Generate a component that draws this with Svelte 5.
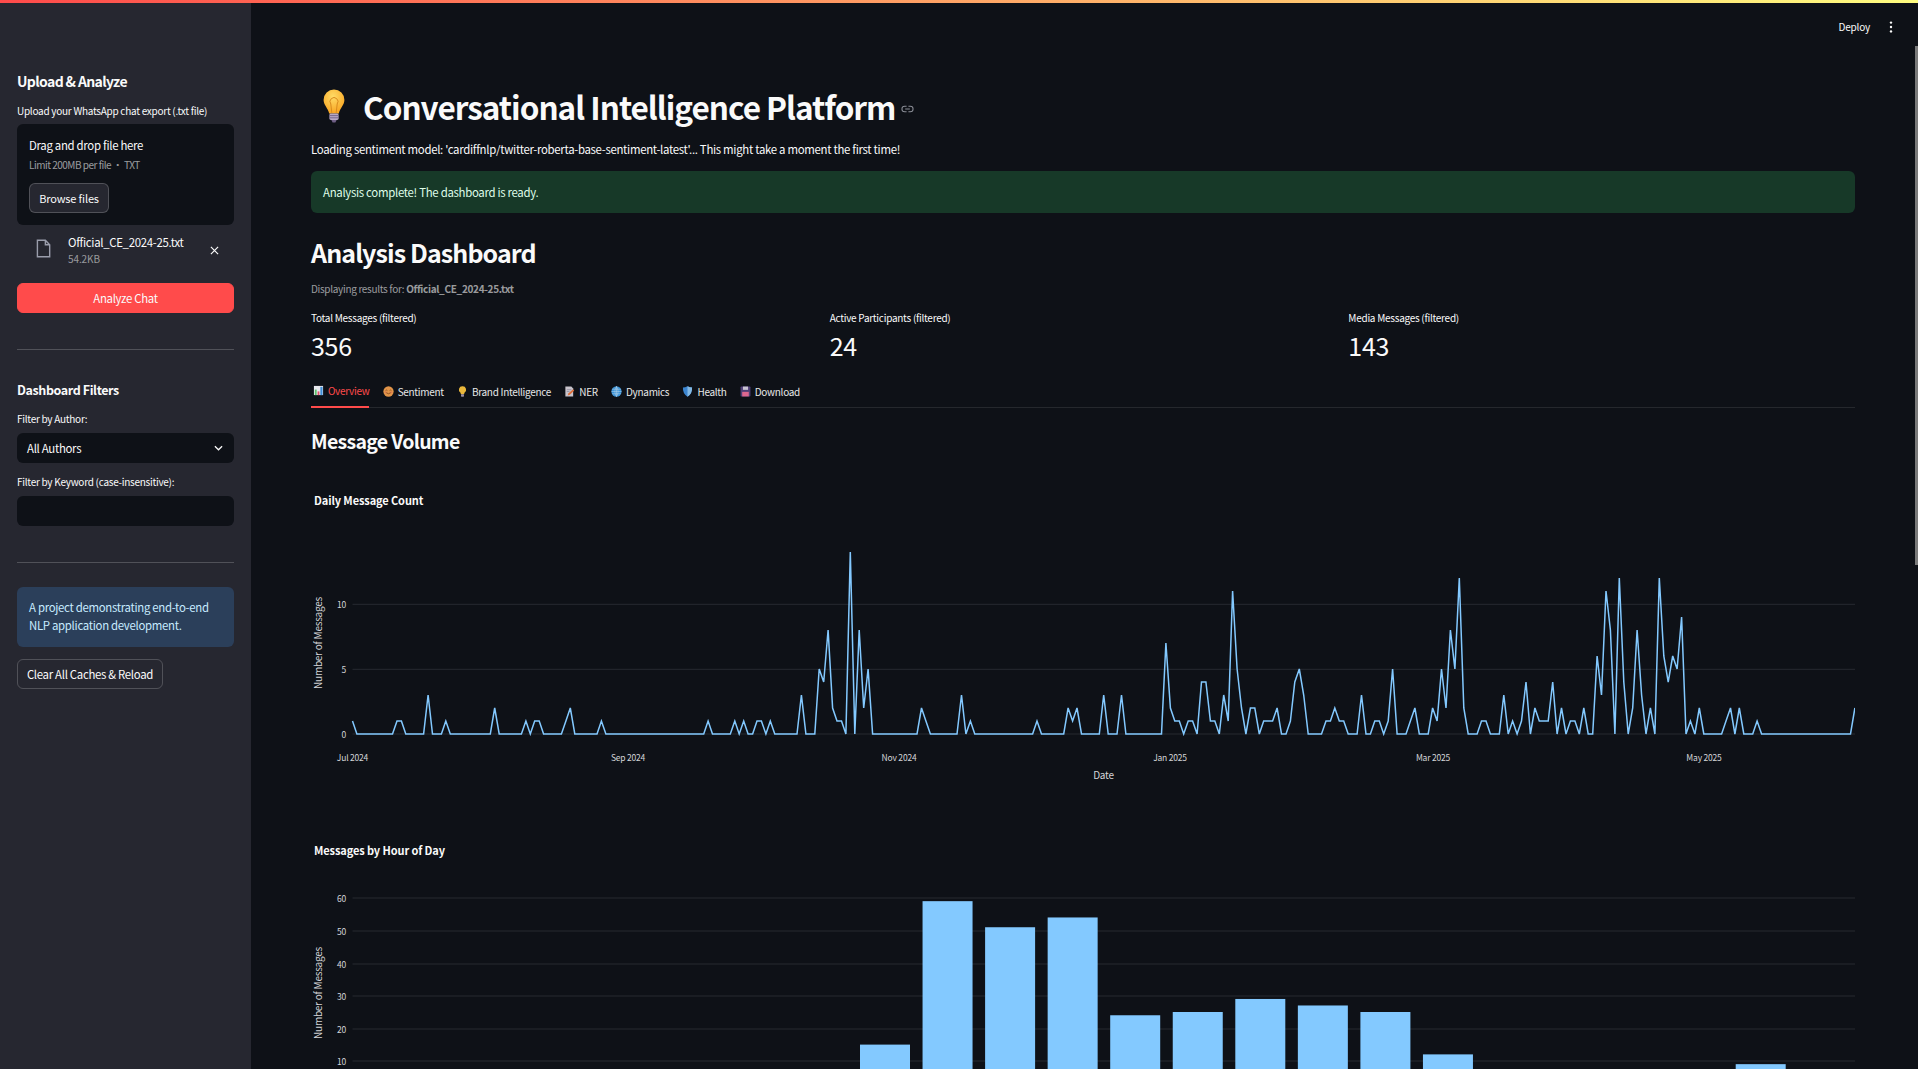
<script>
  const sparse = {0:1,10:1,11:1,17:3,21:1,32:2,39:1,41:1,42:1,48:1,49:2,56:1,80:1,86:1,88:1,91:1,92:1,94:1,101:3,105:5,106:4,107:8,108:2,109:1,110:1,112:14,114:8,115:2,116:5,128:2,129:1,137:3,139:1,154:1,161:2,162:1,163:2,169:3,173:3,183:7,184:2,185:1,186:1,188:1,189:1,191:4,192:4,193:1,194:1,196:3,197:1,198:11,199:5,200:2,202:2,203:2,205:1,206:1,207:1,208:2,211:1,212:4,213:5,214:3,219:1,220:1,221:2,222:1,223:1,227:3,230:1,231:1,233:1,234:5,238:1,239:2,243:2,244:1,245:5,246:2,247:8,248:5,249:12,250:2,254:1,255:1,259:3,261:1,263:1,264:4,266:2,267:1,268:1,269:1,270:4,272:2,274:1,275:1,277:2,280:6,281:3,282:11,283:8,285:12,286:4,288:2,289:8,290:3,292:2,294:12,295:6,296:4,297:6,298:5,299:9,301:1,303:2,309:1,310:2,312:2,316:1,338:2};
  const linePts = Array.from({ length: 339 }, (_, i) => `${(49.5 + i * 4.445).toFixed(1)},${(214 - (sparse[i] || 0) * 13).toFixed(1)}`).join(' ');
  const xTicks = [['Jul 2024', 49.5], ['Sep 2024', 325], ['Nov 2024', 596], ['Jan 2025', 867], ['Mar 2025', 1130], ['May 2025', 1401]];
  const yTicks1 = [[0, 214], [5, 149.3], [10, 84.3]];
  const yTicks2 = [[60, 28], [50, 61], [40, 94], [30, 126], [20, 159], [10, 191]];
  const bars = [[0,15],[1,59],[2,51],[3,54],[4,24],[5,25],[6,29],[7,27],[8,25],[9,12],[14,9]];
  const tabs = [
    { label: 'Overview', icon: 'chart' },
    { label: 'Sentiment', icon: 'smile' },
    { label: 'Brand Intelligence', icon: 'bulb' },
    { label: 'NER', icon: 'memo' },
    { label: 'Dynamics', icon: 'globe' },
    { label: 'Health', icon: 'shield' },
    { label: 'Download', icon: 'disk' }
  ];
  const metrics = [
    { label: 'Total Messages (filtered)', value: '356' },
    { label: 'Active Participants (filtered)', value: '24' },
    { label: 'Media Messages (filtered)', value: '143' }
  ];
</script>

{#snippet tabIcon(name)}
  <svg class="tab-icon" viewBox="0 0 12 12" aria-hidden="true">
    {#if name === 'chart'}
      <rect x="1" y="1" width="10" height="10" fill="#e8e8ee" />
      <rect x="2" y="5" width="2" height="6" fill="#5cc06c" />
      <rect x="5" y="7" width="2" height="4" fill="#e0506a" />
      <rect x="8" y="2" width="2.4" height="9" fill="#3f8fd8" />
    {:else if name === 'smile'}
      <circle cx="6" cy="6" r="5.6" fill="#f3a04e" />
      <path d="M2.8 5 Q3.8 3.8 4.8 5 M7.2 5 Q8.2 3.8 9.2 5" stroke="#8a4a1c" stroke-width=".8" fill="none" />
      <path d="M3.4 7.2 Q6 9.8 8.6 7.2" stroke="#8a4a1c" stroke-width=".9" fill="none" />
      <circle cx="2.9" cy="6.8" r=".9" fill="#ef7a5a" /><circle cx="9.1" cy="6.8" r=".9" fill="#ef7a5a" />
    {:else if name === 'bulb'}
      <path d="M6 .4 A3.8 3.8 0 0 1 8.2 7.4 L7.7 9 H4.3 L3.8 7.4 A3.8 3.8 0 0 1 6 .4Z" fill="#fdc63f" />
      <rect x="4.4" y="9" width="3.2" height="2.6" rx=".6" fill="#a99ab5" />
    {:else if name === 'memo'}
      <path d="M1.5 .6 H8 L10 2.6 V11.4 H1.5Z" fill="#d8d4dc" />
      <path d="M3 4 H8 M3 6 H6" stroke="#9a96a4" stroke-width=".8" />
      <path d="M4 10.4 L5 8 L10 3.6 L11.2 4.8 L6.4 9.6Z" fill="#f0763c" />
    {:else if name === 'globe'}
      <circle cx="6" cy="6" r="5.6" fill="#3f9ee8" />
      <path d="M.6 6 H11.4 M1.2 3.5 H10.8 M1.2 8.5 H10.8 M6 .4 V11.6 M6 .4 Q2.4 6 6 11.6 M6 .4 Q9.6 6 6 11.6" stroke="#bfe2fb" stroke-width=".6" fill="none" />
    {:else if name === 'shield'}
      <path d="M6 .3 Q8.5 1.6 11 1.6 Q11.4 8 6 11.8 Q.6 8 1 1.6 Q3.5 1.6 6 .3Z" fill="#3f8fe0" />
      <path d="M6 .3 Q8.5 1.6 11 1.6 Q11.4 8 6 11.8Z" fill="#8fc8f5" />
    {:else}
      <rect x=".6" y=".6" width="10.8" height="10.8" rx=".8" fill="#55437f" />
      <rect x="3.2" y=".6" width="5.6" height="3.6" fill="#d9d4e4" />
      <rect x="2.4" y="6.4" width="7.2" height="5" fill="#ef6f9a" />
    {/if}
  </svg>
{/snippet}

<div class="shell">
  <div class="deco"></div>
  <div class="body-row">
    <aside class="sidebar">
      <h3 class="side-h first">Upload &amp; Analyze</h3>
      <div class="label up-label">Upload your WhatsApp chat export (.txt file)</div>
      <div class="drop">
        <div class="drop-title">Drag and drop file here</div>
        <div class="drop-sub">Limit 200MB per file • TXT</div>
        <button class="btn browse">Browse files</button>
      </div>
      <div class="file-row">
        <svg class="file-icon" viewBox="0 0 16 20" aria-hidden="true"><path d="M1.5 1.2 H10 L14.6 6 V18.8 H1.5Z M10 1.2 V6 H14.6" fill="none" stroke="#9a9dab" stroke-width="1.5" /></svg>
        <div class="file-info">
          <div class="file-name">Official_CE_2024-25.txt</div>
          <div class="file-size">54.2KB</div>
        </div>
        <svg class="file-x" viewBox="0 0 10 10" aria-hidden="true"><path d="M1 1 L9 9 M9 1 L1 9" stroke="#fafafa" stroke-width="1.3" /></svg>
      </div>
      <button class="btn primary">Analyze Chat</button>
      <hr class="side-hr hr1" />
      <h3 class="side-h second">Dashboard Filters</h3>
      <div class="label author-label">Filter by Author:</div>
      <div class="field select">
        <span>All Authors</span>
        <svg class="chev" viewBox="0 0 10 6" aria-hidden="true"><path d="M1 1 L5 5 L9 1" stroke="#fafafa" stroke-width="1.4" fill="none" /></svg>
      </div>
      <div class="label kw-label">Filter by Keyword (case-insensitive):</div>
      <div class="field"></div>
      <hr class="side-hr hr2" />
      <div class="info">A project demonstrating end-to-end NLP application development.</div>
      <button class="btn clear">Clear All Caches &amp; Reload</button>
    </aside>

    <main class="main">
      <header class="top-actions">
        <span class="deploy">Deploy</span>
        <svg class="kebab" viewBox="0 0 4 12" aria-hidden="true"><circle cx="2" cy="1.6" r="1.2" fill="#fafafa" /><circle cx="2" cy="6" r="1.2" fill="#fafafa" /><circle cx="2" cy="10.4" r="1.2" fill="#fafafa" /></svg>
      </header>

      <div class="title-row">
        <svg class="bulb" viewBox="0 0 22 34" aria-hidden="true">
          <defs>
            <radialGradient id="bulbFill" cx="45%" cy="30%" r="65%"><stop offset="0" stop-color="#ffdb66" /><stop offset="1" stop-color="#f9a825" /></radialGradient>
          </defs>
          <path d="M11 .5 A10.4 10.4 0 0 1 21.4 11 C21.4 16 17 19 15.8 24.5 H6.2 C5 19 .6 16 .6 11 A10.4 10.4 0 0 1 11 .5Z" fill="url(#bulbFill)" />
          <path d="M8.8 24 L7.8 15 A4 4 0 1 1 14.2 15 L13.2 24" fill="none" stroke="#d98a1e" stroke-width="1" />
          <rect x="6.4" y="24.5" width="9.2" height="6.4" rx="1.4" fill="#b7a8c4" />
          <path d="M6.6 26.6 H15.4 M6.6 28.8 H15.4" stroke="#6f5f86" stroke-width=".9" />
          <path d="M8.4 31 H13.6 L12.4 33.4 H9.6Z" fill="#6f5f86" />
        </svg>
        <h1>Conversational Intelligence Platform</h1>
        <svg class="link" viewBox="0 0 14 8" aria-hidden="true"><path d="M6 1 H4 A3 3 0 0 0 4 7 H6 M8 1 H10 A3 3 0 0 1 10 7 H8 M4.5 4 H9.5" fill="none" stroke="#8a8d96" stroke-width="1.1" /></svg>
      </div>
      <p class="loading">Loading sentiment model: 'cardiffnlp/twitter-roberta-base-sentiment-latest'... This might take a moment the first time!</p>
      <div class="success">Analysis complete! The dashboard is ready.</div>
      <h2>Analysis Dashboard</h2>
      <p class="caption">Displaying results for: <strong>Official_CE_2024-25.txt</strong></p>

      <section class="metrics">
        {#each metrics as m}
          <div>
            <div class="m-label">{m.label}</div>
            <div class="m-value">{m.value}</div>
          </div>
        {/each}
      </section>

      <nav class="tabs">
        {#each tabs as t, i}
          <div class="tab" class:active={i === 0}>
            {@render tabIcon(t.icon)}
            <span>{t.label}</span>
          </div>
        {/each}
      </nav>

      <h3 class="section-h">Message Volume</h3>

      <div class="chart-title daily">Daily Message Count</div>
      <svg class="chart c1" viewBox="0 0 1552 275" aria-label="Daily message count line chart">
        {#each yTicks1 as [v, y]}
          <line x1="49.5" x2="1552" y1={y} y2={y} class="grid" />
          <text x="43" y={y + 3.5} text-anchor="end" class="tick">{v}</text>
        {/each}
        {#each xTicks as [l, x]}
          <text {x} y="241" text-anchor="middle" class="tick">{l}</text>
        {/each}
        <text x="800.5" y="259" text-anchor="middle" class="axis">Date</text>
        <text transform="translate(18.5 123) rotate(-90)" text-anchor="middle" class="axis">Number of Messages</text>
        <polyline points={linePts} fill="none" stroke="#83c9ff" stroke-width="1.5" stroke-linejoin="miter" />
      </svg>

      <div class="chart-title hourly">Messages by Hour of Day</div>
      <svg class="chart c2" viewBox="0 0 1552 240" aria-label="Messages by hour of day bar chart">
        {#each yTicks2 as [v, y]}
          <line x1="49.5" x2="1552" y1={y} y2={y} class="grid" />
          <text x="43" y={y + 3.5} text-anchor="end" class="tick">{v}</text>
        {/each}
        <text transform="translate(18.5 123) rotate(-90)" text-anchor="middle" class="axis">Number of Messages</text>
        {#each bars as [k, v]}
          <rect x={557 + k * 62.55} y={223.5 - v * 3.26} width="50" height={v * 3.26 + 10} fill="#83c9ff" />
        {/each}
      </svg>
    </main>
  </div>
  <div class="scroll-thumb"></div>
</div>

<style>
  :global(body) {
    margin: 0;
    background: #0e1117;
    overflow: hidden;
  }
  .shell {
    position: relative;
    width: 1918px;
    height: 1069px;
    overflow: hidden;
    background: #0e1117;
    color: #fafafa;
    font-family: "Noto Sans CJK SC", "Noto Sans", sans-serif;
    font-size: 11.4px;
    letter-spacing: -0.3px;
  }
  .deco {
    height: 3px;
    background: linear-gradient(90deg, #ff4b4b, #fffd80);
  }
  .body-row {
    display: flex;
    height: 1066px;
  }
  .sidebar {
    flex: 0 0 251px;
    box-sizing: border-box;
    background: #262730;
    padding: 0 17px;
  }
  .side-h {
    margin: 0;
    font-size: 14px;
    line-height: 20px;
    font-weight: 600;
    letter-spacing: -0.62px;
  }
  .side-h.first { margin-top: 68px; }
  .side-h.second { font-size: 12.5px; letter-spacing: -0.4px; }
  .label {
    font-size: 10px;
    line-height: 14px;
    letter-spacing: -0.27px;
  }
  .up-label { margin-top: 13px; margin-bottom: 6px; }
  .drop {
    height: 101px;
    box-sizing: border-box;
    background: #0e1117;
    border-radius: 6px;
    padding: 12px;
  }
  .drop-title { line-height: 18px; }
  .drop-sub {
    font-size: 10px;
    line-height: 15px;
    margin-top: 3px;
    letter-spacing: -0.5px;
    color: rgba(250, 250, 250, 0.6);
  }
  .btn {
    display: block;
    box-sizing: border-box;
    font: inherit;
    letter-spacing: inherit;
    color: #fafafa;
    border-radius: 6px;
    background: transparent;
    border: 1px solid rgba(250, 250, 250, 0.2);
    height: 30px;
    padding: 0;
  }
  .browse {
    width: 80px;
    margin-top: 11px;
    background: #262730;
    font-size: 11px;
    letter-spacing: -0.15px;
  }
  .file-row {
    display: flex;
    align-items: center;
    height: 38px;
    margin-top: 6px;
    padding-left: 19px;
  }
  .file-icon { width: 15px; height: 19px; flex: none; margin-bottom: 4px; }
  .file-info { margin-left: 17px; flex: 1; }
  .file-name { line-height: 15px; }
  .file-size { font-size: 10px; line-height: 14px; margin-top: 2px; letter-spacing: -0.1px; color: rgba(250, 250, 250, 0.55); }
  .file-x { width: 9px; height: 9px; margin-right: 15px; flex: none; }
  .primary {
    width: 217px;
    margin-top: 14px;
    background: #ff4b4b;
    border-color: #ff4b4b;
  }
  .side-hr {
    border: 0;
    height: 1px;
    width: 217px;
    background: rgba(250, 250, 250, 0.2);
    margin: 0;
  }
  .hr1 { margin-top: 36px; margin-bottom: 30px; }
  .author-label { margin-top: 12px; margin-bottom: 7px; }
  .field {
    box-sizing: border-box;
    height: 30px;
    width: 217px;
    border-radius: 6px;
    background: #0e1117;
    display: flex;
    align-items: center;
    justify-content: space-between;
    padding: 0 11px 0 10px;
  }
  .chev { width: 9px; height: 6px; }
  .kw-label { margin-top: 12px; margin-bottom: 7px; }
  .hr2 { margin-top: 36px; }
  .info {
    box-sizing: border-box;
    width: 217px;
    height: 60px;
    margin-top: 24px;
    padding: 11px 12px;
    border-radius: 6px;
    background: #2b3f5a;
    color: #c7ebff;
    line-height: 18px;
  }
  .clear {
    width: 146px;
    margin-top: 12px;
  }

  .main {
    position: relative;
    flex: 1;
    min-width: 0;
    box-sizing: border-box;
    padding: 0 63px 0 60px;
  }
  .top-actions {
    position: absolute;
    top: 15px;
    right: 25px;
    display: flex;
    align-items: center;
    gap: 19px;
  }
  .deploy { font-size: 10px; line-height: 18px; letter-spacing: -0.2px; }
  .kebab { width: 4px; height: 12px; }
  .title-row {
    display: flex;
    align-items: center;
    height: 44px;
    margin-top: 81px;
    padding-left: 12px;
  }
  .bulb { width: 22px; height: 34px; flex: none; margin-right: 18px; }
  h1 {
    margin: 0;
    font-size: 31.5px;
    line-height: 44px;
    font-weight: 700;
    letter-spacing: -1px;
  }
  .link { width: 13px; height: 8px; margin-left: 6px; margin-top: 6px; }
  .loading {
    margin: 12px 0 0;
    line-height: 18px;
  }
  .success {
    box-sizing: border-box;
    height: 42px;
    margin-top: 13px;
    padding: 0 12px 1px;
    display: flex;
    align-items: center;
    border-radius: 6px;
    background: #173928;
    color: #dffde9;
  }
  h2 {
    margin: 18px 0 0;
    font-size: 25px;
    line-height: 42px;
    font-weight: 600;
    letter-spacing: -0.9px;
  }
  .caption {
    margin: 9px 0 0;
    font-size: 10px;
    line-height: 14px;
    letter-spacing: -0.32px;
    color: rgba(250, 250, 250, 0.6);
  }
  .caption strong { font-weight: 600; }
  .metrics {
    display: grid;
    grid-template-columns: repeat(3, 1fr);
    column-gap: 12px;
    margin-top: 15px;
  }
  .m-label { font-size: 10px; line-height: 14px; letter-spacing: -0.27px; }
  .m-value { font-size: 25px; line-height: 36px; margin-top: 2px; font-weight: 400; letter-spacing: -0.3px; }
  .tabs {
    display: flex;
    gap: 13.2px;
    margin-top: 12px;
    height: 32px;
    border-bottom: 1px solid rgba(250, 250, 250, 0.1);
  }
  .tab {
    display: flex;
    align-items: center;
    gap: 4px;
    height: 33px;
    font-size: 10px;
    letter-spacing: -0.3px;
    color: #fafafa;
    opacity: 0.92;
    box-sizing: border-box;
  }
  .tab.active {
    color: #ff4b4b;
    border-bottom: 2px solid #ff4b4b;
    opacity: 1;
    padding-left: 2px;
  }
  .tab-icon { width: 11px; height: 11px; flex: none; }
  .section-h {
    margin: 18px 0 0;
    font-size: 19.5px;
    line-height: 30px;
    font-weight: 600;
    letter-spacing: -0.7px;
  }
  .chart-title {
    font-size: 11px;
    line-height: 16px;
    font-weight: 700;
    margin-left: 3px;
    letter-spacing: -0.1px;
  }
  .daily { margin-top: 36px; }
  .hourly { margin-top: 47px; }
  .chart {
    display: block;
    width: 1552px;
    margin-left: -8px;
    overflow: hidden;
  }
  .c1 { height: 275px; margin-top: 12px; }
  .c2 { height: 240px; margin-top: 12px; }
  .grid { stroke: #272a31; stroke-width: 1; }
  .tick { font-size: 8.5px; fill: #d4d5d8; letter-spacing: -0.2px; font-family: "Noto Sans CJK SC", sans-serif; }
  .axis { font-size: 10px; fill: #d4d5d8; letter-spacing: -0.25px; font-family: "Noto Sans CJK SC", sans-serif; }
  .scroll-thumb {
    position: absolute;
    top: 46px;
    right: 0;
    width: 3px;
    height: 519px;
    background: #7a7a7a;
  }
</style>
